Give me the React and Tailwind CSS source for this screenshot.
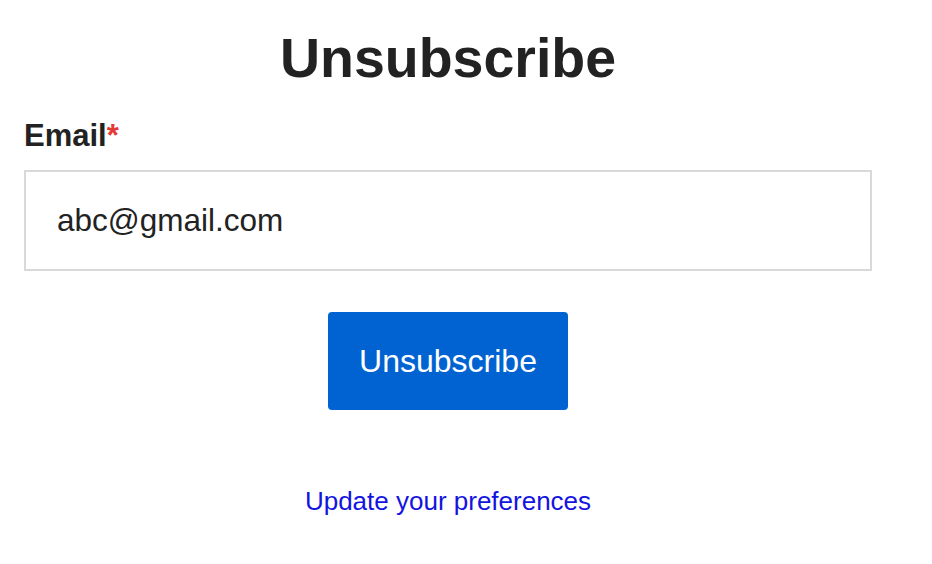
import React from "react";

const App = () => {
  return (
    <div className="min-h-screen bg-white font-['Liberation_Sans',Arial,sans-serif] text-[#222]">
      <div className="ml-6 w-[848px] pt-[26px]">
        <h1 className="text-center text-[55.5px] font-bold leading-[64px]">Unsubscribe</h1>
        <label className="mt-[27px] block text-[31px] font-bold leading-[38px]">
          Email<span className="text-[#e53935]">*</span>
        </label>
        <input
          type="email"
          defaultValue="abc@gmail.com"
          className="mt-[15px] block h-[101px] w-full border-2 border-[#d9d9d9] bg-white px-[31px] text-[31.5px] text-[#222] outline-none"
        />
        <div className="mt-[41px] flex justify-center">
          <button className="h-[98px] w-[240px] rounded bg-[#0063d1] text-[32px] text-white">
            Unsubscribe
          </button>
        </div>
        <div className="mt-[72px] text-center">
          <a href="#" className="text-[26px] text-[#1414e0]">
            Update your preferences
          </a>
        </div>
      </div>
    </div>
  );
};

export default App;
